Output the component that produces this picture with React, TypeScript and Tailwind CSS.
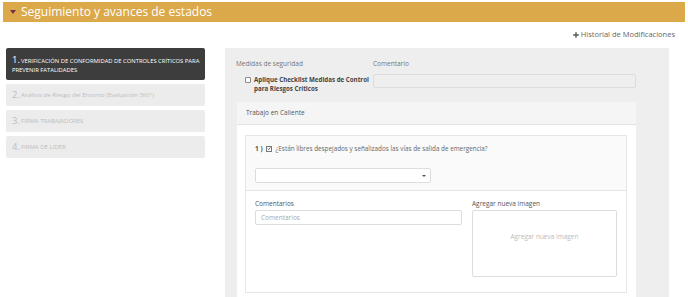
import { Plus } from 'lucide-react'

const steps = [
  { n: '2.', label: 'Análisis de Riesgo del Entorno (Evaluación 360°)' },
  { n: '3.', label: 'FIRMA TRABAJADORES' },
  { n: '4.', label: 'FIRMA DE LIDER' },
]

export default function App() {
  return (
    <div className="w-[688px] h-[297px] overflow-hidden bg-white font-['Open_Sans',sans-serif] text-[#555]">
      {/* header bar */}
      <div className="mx-[3px] mt-[2px] h-[20px] bg-[#dca94a] flex items-center pl-[7px] text-white">
        <span className="w-0 h-0 border-l-[3px] border-r-[3px] border-t-[4px] border-l-transparent border-r-transparent border-t-[#7a2d4a] mr-[5px]" />
        <span className="text-[12px] leading-none">Seguimiento y avances de estados</span>
      </div>

      <div className="flex justify-end items-center pr-[13px] h-[26px] text-[7.5px] text-[#666]">
        <Plus size={8} strokeWidth={4} className="text-[#555] mr-[1px]" />
        Historial de Modificaciones
      </div>

      <div className="flex">
        {/* steps */}
        <div className="ml-[6px] w-[199px] flex flex-col gap-[4px]">
          <div className="h-[32px] rounded-[2px] bg-[#3d3d3d] text-white px-[6px] pt-[7px] text-[5.85px] leading-[9px] whitespace-nowrap">
            <span className="text-[9.5px] mr-[1px]">1.</span>
            VERIFICACIÓN DE CONFORMIDAD DE CONTROLES CRÍTICOS PARA
            <br />
            PREVENIR FATALIDADES
          </div>
          {steps.map((s) => (
            <div
              key={s.n}
              className="h-[22px] rounded-[2px] bg-[#ececec] text-[#bdbdbd] px-[6px] flex items-center text-[6px] whitespace-nowrap"
            >
              <span className="text-[9.5px] mr-[1px]">{s.n}</span>
              {s.label}
            </div>
          ))}
        </div>

        {/* form panel */}
        <div className="ml-[20px] w-[444px] h-[249px] bg-[#eeeeee] pl-[11px] pt-[11px]">
          <div className="flex text-[6.5px]">
            <div className="w-[137px]">
              <div className="text-[#777] h-[10px]">Medidas de seguridad</div>
              <div className="flex mt-[6px] ml-[9px]">
                <span className="w-[6px] h-[6px] border border-[#888] bg-white rounded-[1px] mt-[1.5px] mr-[3px] shrink-0" />
                <div className="font-bold text-[#444] leading-[9px] whitespace-nowrap text-[6.2px]">
                  Aplique Checklist Medidas de Control
                  <br />
                  para Riesgos Críticos
                </div>
              </div>
            </div>
            <div>
              <div className="text-[#777] h-[10px]">Comentario</div>
              <div className="mt-[5px] w-[263px] h-[14px] border border-[#dcdcdc] bg-[#eeeeee] rounded-[2px]" />
            </div>
          </div>

          {/* Trabajo en caliente */}
          <div className="mt-[9px] ml-[1px] w-[399px] h-[200px] bg-white">
            <div className="h-[23px] bg-[#f5f5f5] border-b border-[#e2e2e2] flex items-center pl-[9px] text-[6.5px] text-[#555]">
              Trabajo en Caliente
            </div>
            <div className="pl-[8px] pt-[10px]">
              <div className="w-[382px] border border-[#e6e6e6] text-[6.5px]">
                <div className="bg-[#fafafa] h-[55px] pl-[9px] pt-[8px] border-b border-[#e6e6e6]">
                  <div className="flex items-center h-[9px]">
                    <span className="font-bold text-[#555] mr-[3px]">1 )</span>
                    <span className="w-[6px] h-[6px] border border-[#777] bg-white mr-[4px] flex items-center justify-center">
                      <svg width="5" height="5" viewBox="0 0 10 10">
                        <path d="M1.5 5.5 L4 8 L8.5 2" fill="none" stroke="#444" strokeWidth="2" />
                      </svg>
                    </span>
                    <span className="text-[#666] text-[6.35px]">¿Están libres despejados y señalizados las vías de salida de emergencia?</span>
                  </div>
                  <div className="mt-[15px] w-[176px] h-[15px] bg-white border border-[#ddd] rounded-[2px] flex items-center justify-end pr-[4px]">
                    <span className="w-0 h-0 border-l-[2px] border-r-[2px] border-t-[2.5px] border-l-transparent border-r-transparent border-t-[#555]" />
                  </div>
                </div>
                <div className="bg-white h-[101px] pl-[9px] pt-[8px] flex">
                  <div className="w-[217px]">
                    <div className="text-[#555] h-[11px]">Comentarios</div>
                    <div className="w-[207px] h-[15px] border border-[#ddd] rounded-[2px] flex items-center pl-[5px] text-[#aaa]">
                      Comentarios
                    </div>
                  </div>
                  <div>
                    <div className="text-[#555] h-[11px]">Agregar nueva imagen</div>
                    <div className="w-[145px] h-[67px] border border-[#ddd] rounded-[2px] flex justify-center pt-[21px] text-[#bbb]">
                      Agregar nueva imagen
                    </div>
                  </div>
                </div>
              </div>
            </div>
          </div>
        </div>
      </div>
    </div>
  )
}
